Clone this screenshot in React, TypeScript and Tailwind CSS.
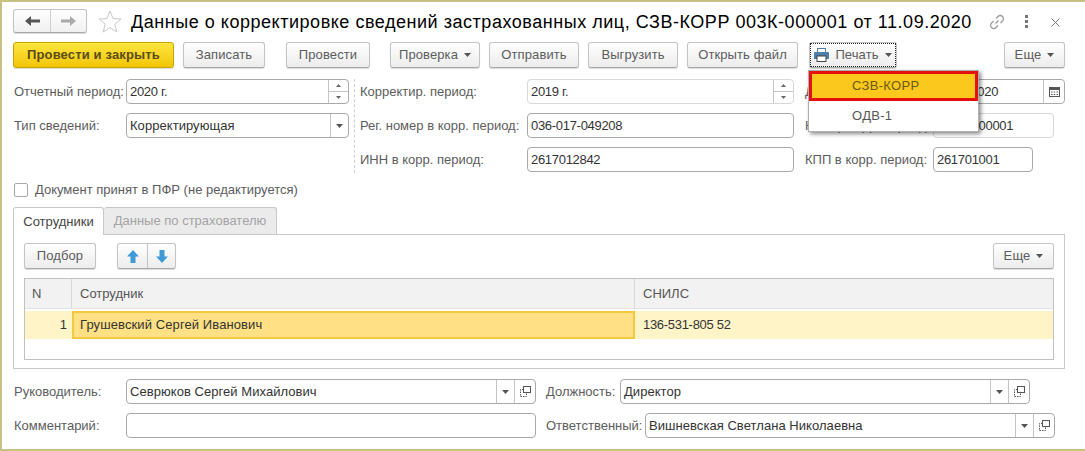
import type { ReactNode } from "react";

const btn =
  "flex h-[26px] items-center justify-center rounded-[3px] border border-[#c4c4c4] border-b-[#a8a8a8] bg-linear-to-b from-white to-[#ececec] text-[13px] tracking-[0.1px] text-[#5c5c5c] shadow-[0_1px_1px_rgba(0,0,0,0.15)]";

function Caret({ color = "#555" }: { color?: string }) {
  return (
    <svg width="7" height="4" viewBox="0 0 7 4" className="shrink-0">
      <path d="M0 0h7L3.500 4z" fill={color} />
    </svg>
  );
}

function Spin() {
  return (
    <div className="flex h-full w-[20px] shrink-0 flex-col border-l border-[#c4c4c4]">
      <div className="flex flex-1 items-center justify-center border-b border-[#c4c4c4]">
        <svg width="5" height="3" viewBox="0 0 5 3">
          <path d="M0 3h5L2.500 0z" fill="#666" />
        </svg>
      </div>
      <div className="flex flex-1 items-center justify-center">
        <svg width="5" height="3" viewBox="0 0 5 3">
          <path d="M0 0h5L2.500 3z" fill="#666" />
        </svg>
      </div>
    </div>
  );
}

function DropButton() {
  return (
    <div className="flex h-full w-[18px] shrink-0 items-center justify-center border-l border-[#c4c4c4]">
      <Caret />
    </div>
  );
}

function OpenButton() {
  return (
    <div className="flex h-full w-[21px] shrink-0 items-center justify-center border-l border-[#c4c4c4]">
      <svg width="11" height="11" viewBox="0 0 11 11" fill="none" stroke="#555" strokeWidth="1">
        <rect x="3.500" y="0.500" width="7" height="6" />
        <path d="M3.500 3.500H0.500V10.500H6.500V6.500" strokeDasharray="1.500 1" />
      </svg>
    </div>
  );
}

function Input({
  width,
  value,
  light,
  digits,
  children,
}: {
  width: string;
  value?: string;
  light?: boolean;
  digits?: boolean;
  children?: ReactNode;
}) {
  return (
    <div
      className={`flex h-[25px] shrink-0 items-center overflow-hidden rounded-[4px] border bg-white ${
        light ? "border-[#d8d8d8]" : "border-[#a9a9a9]"
      } ${width}`}
    >
      <span
        className={`flex-1 truncate pl-[3px] text-[13px] text-[#333] ${digits ? "tracking-[-0.3px]" : "tracking-[0.05px]"}`}
      >
        {value}
      </span>
      {children}
    </div>
  );
}

function Label({ children, width }: { children: ReactNode; width: string }) {
  return <span className={`shrink-0 whitespace-nowrap text-[13px] text-[#5c5c5c] ${width}`}>{children}</span>;
}

export default function App() {
  return (
    <div className="relative h-[451px] w-[1085px] overflow-hidden border-b-2 border-l-2 border-t-2 border-[#c8c183] bg-white font-['Liberation_Sans',Arial,sans-serif]">
      {/* header */}
      <div className="flex h-[40px] items-start pl-[11px] pt-[7px]">
        <div className="flex h-[24px] w-[74px] rounded-[3px] border border-[#c4c4c4] border-b-[#a8a8a8] bg-linear-to-b from-white to-[#f0f0f0] shadow-[0_1px_1px_rgba(0,0,0,0.15)]">
          <div className="flex w-[37px] items-center justify-center border-r border-[#cfcfcf]">
            <svg width="15" height="10" viewBox="0 0 15 10">
              <path d="M0 5l6-5v3.500h9v3H6V10z" fill="#555" />
            </svg>
          </div>
          <div className="flex flex-1 items-center justify-center">
            <svg width="15" height="10" viewBox="0 0 15 10">
              <path d="M15 5L9 0v3.500H0v3h9V10z" fill="#aaa" />
            </svg>
          </div>
        </div>
        <svg width="24" height="23" viewBox="0 0 24 23" className="ml-[11px] mt-[1px]" fill="#fff" stroke="#c8c8c8">
          <path d="M12 1l3 7.500 8 .5-6.200 5.100 2 7.900L12 17.600 5.200 22l2-7.900L1 9l8-.5z" />
        </svg>
        <span className="ml-[9px] whitespace-nowrap text-[18px] leading-[26px] tracking-[0.53px] text-black">
          Данные о корректировке сведений застрахованных лиц, СЗВ-КОРР 003К-000001 от 11.09.2020
        </span>
        <svg width="16" height="16" viewBox="0 0 16 16" className="ml-[17px] mt-[5px]" fill="none" stroke="#999" strokeWidth="1.200">
          <path d="M6.500 9.500l3-3M7 4.500l2-2a3 3 0 0 1 4.500 4.500l-2 2M9 11.500l-2 2A3 3 0 0 1 2.500 9l2-2" />
        </svg>
        <div className="ml-[20px] mt-[6px] flex flex-col gap-[2px]">
          <span className="h-[3px] w-[3px] bg-[#777]" />
          <span className="h-[3px] w-[3px] bg-[#777]" />
          <span className="h-[3px] w-[3px] bg-[#777]" />
        </div>
        <svg width="9" height="9" viewBox="0 0 9 9" className="ml-[23px] mt-[9px]" stroke="#777">
          <path d="M0.500 0.500l8 8M8.500 0.500l-8 8" />
        </svg>
      </div>

      {/* toolbar */}
      <div className="flex h-[28px] items-start pl-[11px]">
        <div className="flex h-[26px] w-[161px] items-center justify-center rounded-[3px] border border-[#c9a500] bg-linear-to-b from-[#ffe53b] to-[#f2c500] text-[13px] font-bold tracking-[0.15px] text-[#5a4d10] shadow-[0_1px_1px_rgba(0,0,0,0.15)]">
          Провести и закрыть
        </div>
        <div className={`${btn} ml-[9px] w-[82px]`}>Записать</div>
        <div className={`${btn} ml-[21px] w-[84px]`}>Провести</div>
        <div className={`${btn} ml-[20px] w-[90px] gap-[6px]`}>
          Проверка
          <Caret />
        </div>
        <div className={`${btn} ml-[9px] w-[90px]`}>Отправить</div>
        <div className={`${btn} ml-[9px] w-[90px]`}>Выгрузить</div>
        <div className={`${btn} ml-[9px] w-[111px]`}>Открыть файл</div>
        <div className={`${btn} relative ml-[11px] w-[88px] gap-[6px]`}>
          <span className="absolute inset-0 border border-dotted border-[#222]" />
          <svg width="15" height="14" viewBox="0 0 15 14">
            <rect x="3.500" y="0.500" width="8" height="4" fill="#fff" stroke="#4f7ea8" />
            <path d="M1 4h13a1 1 0 0 1 1 1v6H0V5a1 1 0 0 1 1-1z" fill="#4f7ea8" />
            <rect x="3" y="8" width="9" height="5.500" fill="#fff" stroke="#444" />
          </svg>
          Печать
          <Caret />
        </div>
        <div className={`${btn} ml-[107px] w-[61px] gap-[6px]`}>
          Еще
          <Caret />
        </div>
      </div>

      {/* header fields */}
      <div className="mt-[9px] flex pl-[12px]">
        <div className="flex w-[335px] flex-col gap-[9px]">
          <div className="flex items-center">
            <Label width="w-[112px]">Отчетный период:</Label>
            <Input width="w-[223px]" value="2020 г." digits>
              <Spin />
            </Input>
          </div>
          <div className="flex items-center">
            <Label width="w-[112px]">Тип сведений:</Label>
            <Input width="w-[223px]" value="Корректирующая">
              <DropButton />
            </Input>
          </div>
        </div>
        <div className="ml-[5px] h-[94px] border-l border-dashed border-[#d0d0d0]" />
        <div className="ml-[5px] flex flex-col gap-[9px]">
          <div className="flex items-center">
            <Label width="w-[167px]">Корректир. период:</Label>
            <Input width="w-[267px]" value="2019 г." light digits>
              <Spin />
            </Input>
            <Label width="w-[128px] ml-[11px]">Дата в корр. период:</Label>
            <Input width="w-[132px]" value="11.09.2020" digits>
              <div className="flex h-full w-[21px] shrink-0 items-center justify-center border-l border-[#c4c4c4]">
                <svg width="11" height="11" viewBox="0 0 11 11">
                  <rect x="0.500" y="1.500" width="10" height="9" fill="#fff" stroke="#555" />
                  <rect x="0" y="1" width="11" height="3" fill="#555" />
                  <path d="M2 6h1.500M4.700 6h1.500M7.500 6H9M2 8.500h1.500M4.700 8.500h1.500M7.500 8.500H9" stroke="#555" />
                </svg>
              </div>
            </Input>
          </div>
          <div className="flex items-center">
            <Label width="w-[167px]">Рег. номер в корр. период:</Label>
            <Input width="w-[267px]" value="036-017-049208" digits />
            <Label width="w-[128px] ml-[11px]">Номер корр. период:</Label>
            <Input width="w-[121px]" value="00000000001" light digits />
          </div>
          <div className="flex items-center">
            <Label width="w-[167px]">ИНН в корр. период:</Label>
            <Input width="w-[267px]" value="2617012842" digits />
            <Label width="w-[128px] ml-[11px]">КПП в корр. период:</Label>
            <Input width="w-[100px]" value="261701001" digits />
          </div>
        </div>
      </div>

      {/* checkbox */}
      <div className="ml-[12px] mt-[10px] flex h-[14px] items-center gap-[7px]">
        <span className="h-[14px] w-[14px] rounded-[2px] border border-[#a9a9a9] bg-white" />
        <span className="text-[13px] text-[#5c5c5c]">Документ принят в ПФР (не редактируется)</span>
      </div>

      {/* tabs */}
      <div className="ml-[11px] mt-[9px] flex h-[28px] items-end">
        <div className="relative z-10 -mb-px flex h-[28px] w-[91px] items-center justify-center rounded-t-[3px] border border-b-0 border-[#c8c8c8] bg-white text-[13px] text-[#444]">
          Сотрудники
        </div>
        <div className="flex h-[27px] w-[173px] items-center justify-center rounded-t-[3px] border border-b-0 border-l-0 border-[#c8c8c8] bg-[#ebebeb] text-[13px] text-[#a4a4a4]">
          Данные по страхователю
        </div>
      </div>
      <div className="ml-[11px] h-[135px] w-[1052px] border border-[#c8c8c8] px-[10px] pt-[8px]">
        <div className="flex h-[27px] items-start">
          <div className={`${btn} w-[72px]`}>Подбор</div>
          <div className="ml-[21px] flex h-[26px] w-[59px] rounded-[3px] border border-[#c4c4c4] border-b-[#a8a8a8] bg-linear-to-b from-white to-[#ececec] shadow-[0_1px_1px_rgba(0,0,0,0.15)]">
            <div className="flex w-[30px] items-center justify-center border-r border-[#c4c4c4]">
              <svg width="12" height="13" viewBox="0 0 12 13">
                <path d="M6 0l6 6.500H8.500V13h-5V6.500H0z" fill="#3f9bd8" />
              </svg>
            </div>
            <div className="flex flex-1 items-center justify-center">
              <svg width="12" height="13" viewBox="0 0 12 13">
                <path d="M6 13l6-6.500H8.500V0h-5v6.500H0z" fill="#3f9bd8" />
              </svg>
            </div>
          </div>
          <div className={`${btn} ml-auto w-[61px] gap-[6px]`}>
            Еще
            <Caret />
          </div>
        </div>

        <div className="mt-[8px] h-[82px] w-[1030px] border border-[#c0c0c0]">
          <div className="flex h-[30px] border-b border-[#e2e2e2] bg-[#f2f2f2] text-[13px] text-[#555]">
            <div className="flex w-[47px] items-center border-r border-[#d8d8d8] pl-[7px]">N</div>
            <div className="flex w-[563px] items-center border-r border-[#d8d8d8] pl-[8px]">Сотрудник</div>
            <div className="flex flex-1 items-center pl-[8px]">СНИЛС</div>
          </div>
          <div className="mt-[2px] flex h-[28px] bg-[#fff3c8] text-[13px] text-[#333]">
            <div className="flex w-[47px] items-center justify-end pr-[5px]">1</div>
            <div className="flex w-[563px] items-center border-2 border-[#f0c93e] bg-[#ffe084] pl-[6px] tracking-[0.1px]">
              Грушевский Сергей Иванович
            </div>
            <div className="flex flex-1 items-center pl-[8px] tracking-[-0.3px]">136-531-805 52</div>
          </div>
        </div>
      </div>

      {/* footer fields */}
      <div className="ml-[12px] mt-[10px] flex items-center">
        <Label width="w-[112px]">Руководитель:</Label>
        <Input width="w-[410px]" value="Севрюков Сергей Михайлович">
          <DropButton />
          <OpenButton />
        </Input>
        <Label width="w-[74px] ml-[10px]">Должность:</Label>
        <Input width="w-[410px]" value="Директор">
          <DropButton />
          <OpenButton />
        </Input>
      </div>
      <div className="ml-[12px] mt-[9px] flex items-center">
        <Label width="w-[112px]">Комментарий:</Label>
        <Input width="w-[410px]" />
        <Label width="w-[99px] ml-[10px]">Ответственный:</Label>
        <Input width="w-[410px]" value="Вишневская Светлана Николаевна">
          <DropButton />
          <OpenButton />
        </Input>
      </div>

      {/* print menu */}
      <div className="absolute left-[806px] top-[68px] z-20 w-[171px] border border-[#b0b0b0] bg-white shadow-[2px_2px_4px_rgba(0,0,0,0.45)]">
        <div className="flex h-[30px] items-center border-[3px] border-[#e3100e] bg-[#fbc81d] pl-[40px] text-[13px] tracking-[0.3px] text-[#6b5a14]">
          СЗВ-КОРР
        </div>
        <div className="flex h-[30px] items-center pl-[43px] text-[13px] tracking-[0.3px] text-[#555]">ОДВ-1</div>
      </div>
    </div>
  );
}
